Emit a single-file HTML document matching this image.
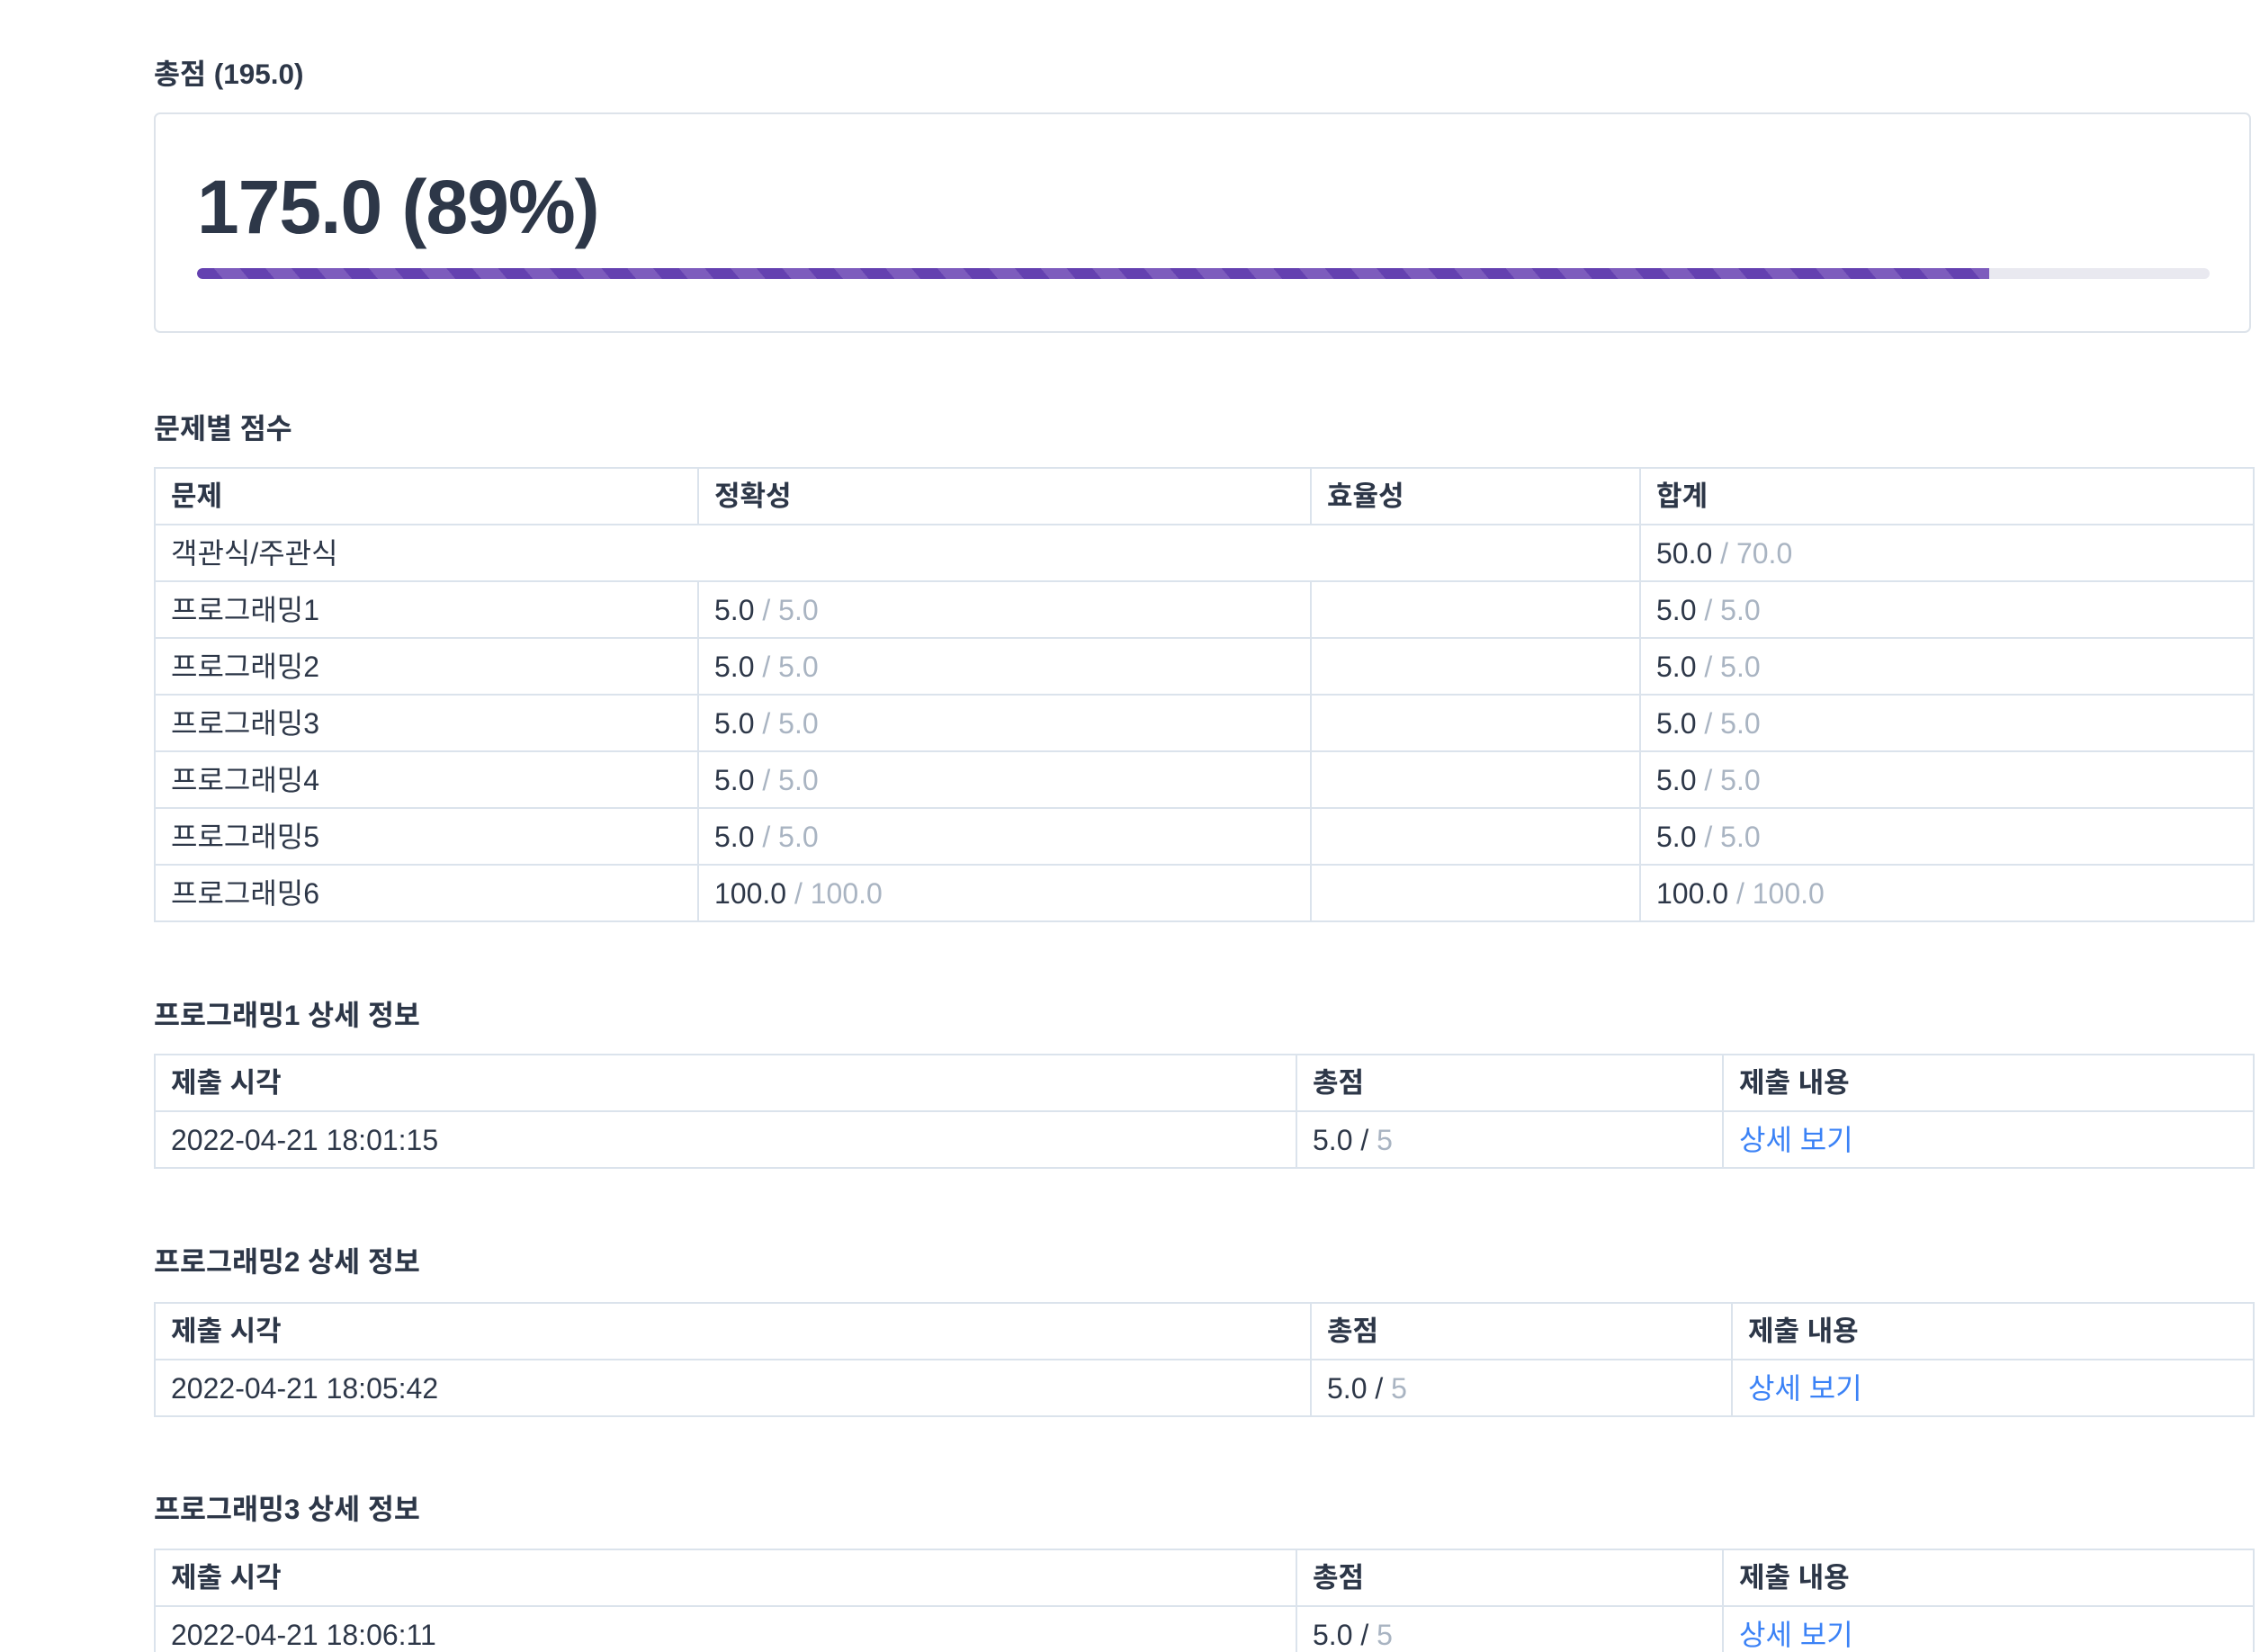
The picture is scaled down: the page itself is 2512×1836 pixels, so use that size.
<!DOCTYPE html>
<html><head><meta charset="utf-8">
<style>
html,body{margin:0;padding:0;background:#fff;width:2512px;height:1836px;overflow:hidden;position:relative}
body{font-family:"Liberation Sans","Noto Sans CJK KR",sans-serif;color:#2d3748}
.h{position:absolute;left:171px;font-size:31.5px;font-weight:700;line-height:40px;margin:0}
.card{position:absolute;left:171px;top:125px;width:2331px;height:245px;border:2px solid #dde3ea;border-radius:7px;box-sizing:border-box}
.big{position:absolute;left:219px;top:180px;font-size:84px;font-weight:700;line-height:100px;letter-spacing:-1px}
.track{position:absolute;left:219px;top:298px;width:2237px;height:12px;background:#e9e9f0;border-radius:6px;overflow:hidden}
.fill{position:absolute;left:0;top:0;height:12px;width:1992px;background:repeating-linear-gradient(50deg,#6441b0 0 22px,#7d5cbd 22px 44px);border-radius:6px 0 0 6px}
table{position:absolute;left:171px;width:2333px;border-collapse:collapse;table-layout:fixed}
td,th{border:2px solid #dbe3ec;height:61px;padding:0 0 0 17px;text-align:left;font-size:32px;line-height:40px;white-space:nowrap;overflow:hidden;vertical-align:middle}
th{font-weight:700;font-size:31px}
td{font-weight:400}
.g{color:#a9b4c2}
.l{color:#3b82f6}
</style></head><body>
<div class="h" style="top:62px">총점 (195.0)</div>
<div class="card"></div>
<div class="big">175.0 (89%)</div>
<div class="track"><div class="fill"></div></div>

<div class="h" style="top:456px">문제별 점수</div>
<table style="top:519px">
<colgroup><col style="width:604px"><col style="width:681px"><col style="width:366px"><col style="width:682px"></colgroup>
<tr><th>문제</th><th>정확성</th><th>효율성</th><th>합계</th></tr>
<tr><td colspan="3">객관식/주관식</td><td>50.0 <span class="g">/ 70.0</span></td></tr>
<tr><td>프로그래밍1</td><td>5.0 <span class="g">/ 5.0</span></td><td></td><td>5.0 <span class="g">/ 5.0</span></td></tr>
<tr><td>프로그래밍2</td><td>5.0 <span class="g">/ 5.0</span></td><td></td><td>5.0 <span class="g">/ 5.0</span></td></tr>
<tr><td>프로그래밍3</td><td>5.0 <span class="g">/ 5.0</span></td><td></td><td>5.0 <span class="g">/ 5.0</span></td></tr>
<tr><td>프로그래밍4</td><td>5.0 <span class="g">/ 5.0</span></td><td></td><td>5.0 <span class="g">/ 5.0</span></td></tr>
<tr><td>프로그래밍5</td><td>5.0 <span class="g">/ 5.0</span></td><td></td><td>5.0 <span class="g">/ 5.0</span></td></tr>
<tr><td>프로그래밍6</td><td>100.0 <span class="g">/ 100.0</span></td><td></td><td>100.0 <span class="g">/ 100.0</span></td></tr>
</table>

<div class="h" style="top:1108px">프로그래밍1 상세 정보</div>
<table style="top:1171px">
<colgroup><col style="width:1269px"><col style="width:474px"><col style="width:590px"></colgroup>
<tr><th>제출 시각</th><th>총점</th><th>제출 내용</th></tr>
<tr><td>2022-04-21 18:01:15</td><td>5.0 / <span class="g">5</span></td><td class="l">상세 보기</td></tr>
</table>

<div class="h" style="top:1382px">프로그래밍2 상세 정보</div>
<table style="top:1447px">
<colgroup><col style="width:1285px"><col style="width:468px"><col style="width:580px"></colgroup>
<tr><th>제출 시각</th><th>총점</th><th>제출 내용</th></tr>
<tr><td>2022-04-21 18:05:42</td><td>5.0 / <span class="g">5</span></td><td class="l">상세 보기</td></tr>
</table>

<div class="h" style="top:1657px">프로그래밍3 상세 정보</div>
<table style="top:1721px">
<colgroup><col style="width:1269px"><col style="width:474px"><col style="width:590px"></colgroup>
<tr><th>제출 시각</th><th>총점</th><th>제출 내용</th></tr>
<tr><td>2022-04-21 18:06:11</td><td>5.0 / <span class="g">5</span></td><td class="l">상세 보기</td></tr>
</table>
</body></html>
